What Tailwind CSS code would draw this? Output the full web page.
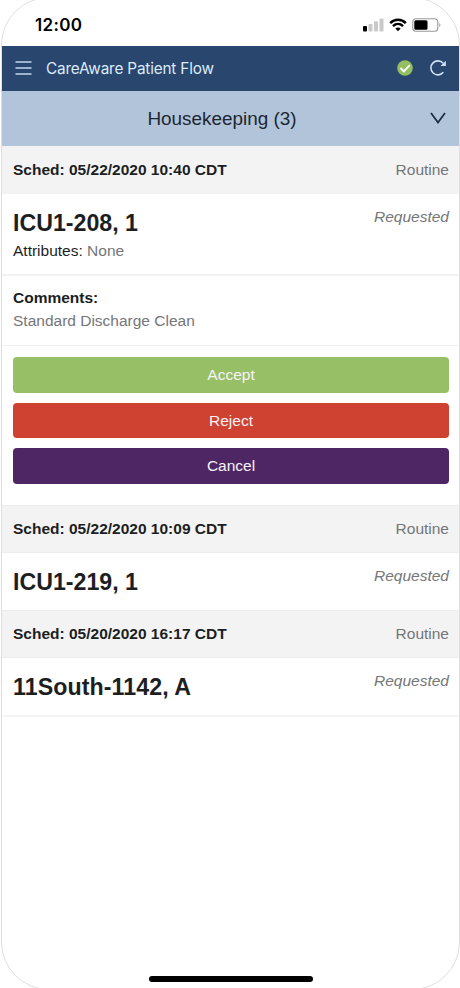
<!DOCTYPE html>
<html lang="en">
<head>
<meta charset="utf-8">
<title>CareAware Patient Flow</title>
<script src="https://cdn.jsdelivr.net/npm/@tailwindcss/browser@4"></script>
</head>
<body class="bg-white">
<div class="h-[988px] w-[460px] overflow-hidden bg-white">
<div class="-mt-[3px] ml-px flex h-[993px] w-[459px] flex-col overflow-hidden rounded-[48px] border border-[#dedfe1] bg-white font-['Liberation_Sans',sans-serif] text-[15.5px] leading-[23px] text-[#1c1e1f]">
  <div class="flex h-12 shrink-0 items-center justify-between pt-[6px] pr-[17px] pl-[33px]">
    <span class="font-['Inter',sans-serif] text-[17px] font-semibold tracking-[0.35px] text-black">12:00</span>
    <div class="flex items-center">
      <svg class="h-[14px] w-[21px]" viewBox="0 0 21 14"><rect x="0" y="8" width="4" height="5.5" rx="1" fill="#000"/><rect x="5.5" y="6" width="4" height="7.5" rx="1" fill="#c9c9c9"/><rect x="11" y="3.3" width="4" height="10.2" rx="1" fill="#c9c9c9"/><rect x="16.5" y="0.5" width="4" height="13" rx="1" fill="#c9c9c9"/></svg>
      <svg class="ml-[5px] h-[14px] w-[18px]" viewBox="0 0 18 14" fill="none" stroke="#000" stroke-width="2.5"><path d="M1.2 5.2C5.6.7 12.4.7 16.8 5.2M4 8.2c2.9-2.8 7.1-2.8 10 0"/><path d="M6.3 10.6C8 9.2 10 9.2 11.7 10.6L9 13.3z" fill="#000" stroke="none"/></svg>
      <svg class="ml-[5px] h-[14px] w-[30px]" viewBox="0 0 30 14"><rect x=".8" y=".8" width="25" height="12.4" rx="3.3" fill="none" stroke="#999" stroke-width="1.1"/><rect x="2.3" y="2.2" width="13.2" height="9.6" rx="1.5" fill="#000"/><path d="M27.3 5c1.5.6 1.5 3.4 0 4z" fill="#999"/></svg>
    </div>
  </div>
  <header class="flex h-[44.5px] shrink-0 items-center bg-[#29466f] pr-[12px] pl-[13px]">
    <svg class="h-[16px] w-[17px]" viewBox="0 0 17 16" stroke="#c3d6ee" stroke-width="1.6"><path d="M.5 2h16M.5 8h16M.5 14h16"/></svg>
    <h1 class="ml-[14px] grow font-['Inter',sans-serif] text-[15.3px] tracking-[-0.17px] text-[#deebfa]">CareAware Patient Flow</h1>
    <svg class="h-4 w-4" viewBox="0 0 16 16"><circle cx="8" cy="8" r="7.8" fill="#94bf60"/><path d="M3.5 8l3.3 3.4 6-6.2" fill="none" stroke="#fff" stroke-width="1.8"/></svg>
    <svg class="ml-[16px] h-[18px] w-[18px]" viewBox="0 0 18 18" fill="none" stroke="#cfe0f5" stroke-width="1.6"><path d="M14.2 4.3A7 7 0 1 0 14.3 13.3"/><path d="M16.9 1.7v5.2h-5.4z" fill="#cfe0f5" stroke="none"/></svg>
  </header>
  <div class="flex h-[55.5px] shrink-0 items-center bg-[#b2c4da] pr-[13px]">
    <h2 class="grow pl-[12px] text-center text-[18.9px] text-[#1d2730]">Housekeeping (3)</h2>
    <svg class="h-[12px] w-[16px]" viewBox="0 0 16 12" fill="none" stroke="#1d2a3d" stroke-width="1.7"><path d="M1 1l7 9.5L15 1"/></svg>
  </div>
  <div class="flex h-12 shrink-0 items-center justify-between bg-[#f3f3f3] pr-[10px] pb-[2px] pl-[11px]"><b>Sched: 05/22/2020 10:40 CDT</b><span class="text-[#747678]">Routine</span></div>
  <div class="flex h-[82px] shrink-0 justify-between border-b-2 border-[#f3f3f3] pr-[10px] pl-[11px]">
    <div class="pt-[15px]"><h3 class="text-[23.2px] leading-[28px] font-bold">ICU1-208, 1</h3><p class="mt-[2px]">Attributes: <span class="text-[#747678]">None</span></p></div>
    <i class="pt-[11px] text-[#747678]">Requested</i>
  </div>
  <div class="h-[70px] shrink-0 border-b border-[#f1f1f1] px-[11px] pt-[10px]"><b class="block">Comments:</b><p class="text-[#747678]">Standard Discharge Clean</p></div>
  <div class="flex h-[159px] shrink-0 flex-col gap-[10px] pt-[11px] pr-[10px] pl-[11px] text-[#f6f3f8]">
    <button class="h-[35.5px] shrink-0 rounded-[4px] bg-[#96bf66]">Accept</button>
    <button class="h-[35.5px] shrink-0 rounded-[4px] bg-[#cf4130]">Reject</button>
    <button class="h-[35.5px] shrink-0 rounded-[4px] bg-[#4f2664]">Cancel</button>
  </div>
  <div class="flex h-[48px] shrink-0 items-center justify-between border-y border-[#ededed] bg-[#f3f3f3] pr-[10px] pb-[2px] pl-[11px]"><b>Sched: 05/22/2020 10:09 CDT</b><span class="text-[#747678]">Routine</span></div>
  <div class="flex h-[57px] shrink-0 justify-between pr-[10px] pl-[11px]"><h3 class="pt-[15px] text-[23.2px] leading-[28px] font-bold">ICU1-219, 1</h3><i class="pt-[11px] text-[#747678]">Requested</i></div>
  <div class="flex h-[48px] shrink-0 items-center justify-between border-y border-[#ededed] bg-[#f3f3f3] pr-[10px] pb-[2px] pl-[11px]"><b>Sched: 05/20/2020 16:17 CDT</b><span class="text-[#747678]">Routine</span></div>
  <div class="flex h-[59px] shrink-0 justify-between border-b-2 border-[#f5f5f5] pr-[10px] pl-[11px]"><h3 class="pt-[15px] text-[23.2px] leading-[28px] font-bold tracking-[0.08px]">11South-1142, A</h3><i class="pt-[11px] text-[#747678]">Requested</i></div>
  <div class="mt-auto mb-[7px] ml-[147px] h-[6px] w-[164px] shrink-0 rounded-full bg-black"></div>
</div>
</div>
</body>
</html>
